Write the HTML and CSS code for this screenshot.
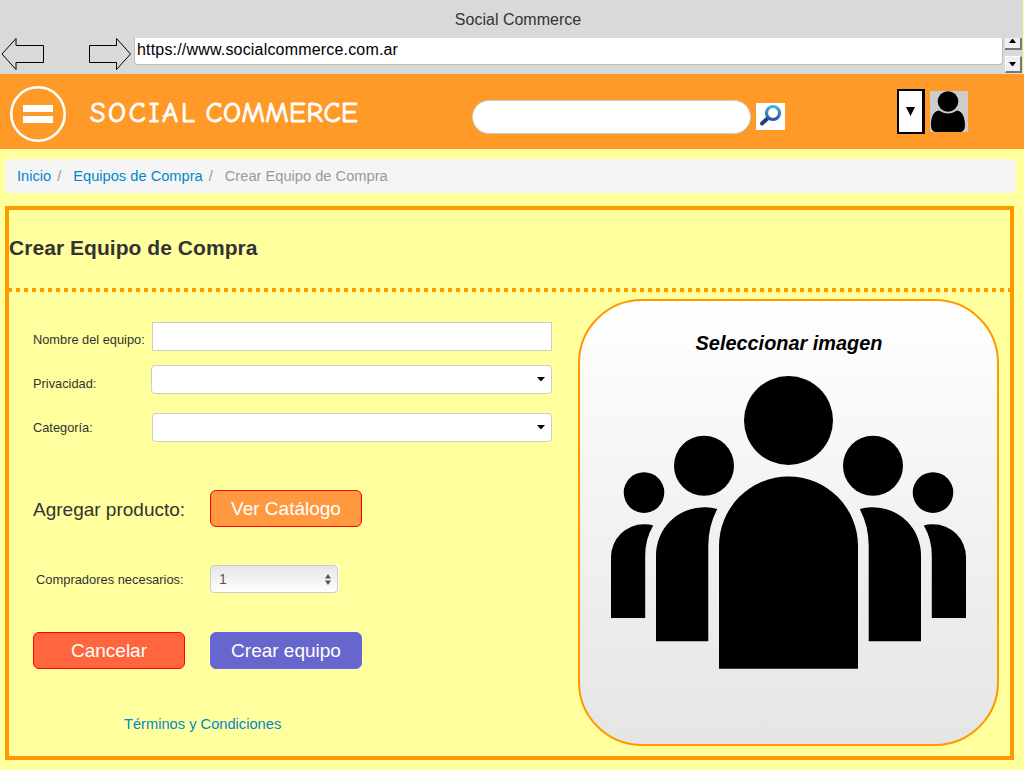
FILE: index.html
```html
<!DOCTYPE html>
<html lang="es">
<head>
<meta charset="utf-8">
<title>Social Commerce</title>
<link rel="stylesheet" href="styles.css">
</head>
<body>
<div class="chrome">
  <div class="window-title">Social Commerce</div>
  <div class="nav-row">
    <svg class="arrow" width="44" height="34" viewBox="0 0 44 34"><path d="M1 16 L15 .5 V7.500 H42.500 V24.500 H15 V31.500 Z"/></svg>
    <svg class="arrow forward" width="44" height="34" viewBox="0 0 44 34"><path d="M42.500 16 L28.500 .5 V7.500 H1.500 V24.500 H28.500 V31.500 Z"/></svg>
    <div class="address">https://www.socialcommerce.com.ar</div>
    <div class="spinner">
      <div class="spin up"><svg width="8" height="4" viewBox="0 0 8 4"><path d="M0 4 L3 0 H4 L7 4 Z"/></svg></div>
      <div class="spin down"><svg width="8" height="4" viewBox="0 0 8 4"><path d="M0 0 H7 L4 4 H3 Z"/></svg></div>
    </div>
  </div>
</div>
<header class="header">
  <svg class="menu" width="56" height="56" viewBox="0 0 56 56"><circle cx="28" cy="28" r="26.700"/><path d="M13 19 H43 V26 H13 Z M13 30 H43 V37 H13 Z"/></svg>
  <div class="brand"><span class="brand-first">SOCIAL</span> <span>COMMERCE</span></div>
  <div class="search"></div>
  <div class="search-button">
    <svg width="29" height="27" viewBox="0 0 29 27">
      <defs><linearGradient id="lens" x1="0" y1="0" x2="0" y2="1"><stop offset="0" stop-color="#45b4dc"/><stop offset="1" stop-color="#2857a5"/></linearGradient></defs>
      <path d="M12 15 L6 20.500" stroke="#20407e" stroke-width="4" stroke-linecap="round"/>
      <circle cx="17" cy="10" r="6.500" fill="#fff" stroke="url(#lens)" stroke-width="3.200"/>
    </svg>
  </div>
  <div class="account-toggle"><svg width="9" height="9" viewBox="0 0 9 9"><path d="M0 0 H9 L4.500 9 Z"/></svg></div>
  <div class="avatar"><svg width="38" height="41" viewBox="0 0 38 41"><circle cx="18" cy="10.500" r="10.300"/><path d="M9 19.500 Q18 25.500 27 19.500 C33 20 35 28 35 34 Q35 41 30 41 H6 Q1 41 1 34 C1 27 3 20 9 19.500 Z"/></svg></div>
</header>
<nav class="crumbs"><a>Inicio</a><i>/</i><a>Equipos de Compra</a><i>/</i><span>Crear Equipo de Compra</span></nav>
<main class="panel">
  <h1 class="title">Crear Equipo de Compra</h1>
  <div class="dots"></div>
  <div class="content">
    <form class="form">
      <div class="row name-row"><label>Nombre del equipo:</label><div class="field square"></div></div>
      <div class="row privacy-row"><label>Privacidad:</label><div class="field wide"><svg class="caret" width="8" height="4" viewBox="0 0 8 4"><path d="M0 0 H8 L4.500 4 H3.500 Z"/></svg></div></div>
      <div class="row category-row"><label>Categoría:</label><div class="field"><svg class="caret" width="8" height="4" viewBox="0 0 8 4"><path d="M0 0 H8 L4.500 4 H3.500 Z"/></svg></div></div>
      <div class="row product-row"><span class="product-label">Agregar producto:</span><div class="button catalog">Ver Catálogo</div></div>
      <div class="row buyers-row"><label>Compradores necesarios:</label>
        <div class="count-wrap"><div class="count"><span>1</span><svg width="6" height="11" viewBox="0 0 6 11"><path d="M3 0 L6 4.500 H0 Z M0 6.500 H6 L3 11 Z"/></svg></div></div>
      </div>
      <div class="row actions"><div class="button cancel">Cancelar</div><div class="button create">Crear equipo</div></div>
      <a class="terms">Términos y Condiciones</a>
    </form>
    <section class="picker">
      <div class="picker-title">Seleccionar imagen</div>
      <svg class="team" width="357" height="294" viewBox="610 376 357 294">
        <defs><g id="side">
          <circle cx="704" cy="465.800" r="30"/>
          <circle cx="644" cy="492.600" r="20.300"/>
          <path d="M656 641.200 V556 A48 48 0 0 1 704 507.300 Q711 507 717.200 509 A80.500 80.500 0 0 0 708.300 545.500 V641.200 Z"/>
          <path d="M611 618 V557 A33 33 0 0 1 644 524.200 Q649 524 653.200 525.500 A59 59 0 0 0 645.200 556 V618 Z"/>
        </g></defs>
        <circle cx="788.500" cy="420.500" r="44.500"/>
        <path d="M719 668.800 V546 A69.500 69.500 0 0 1 858 546 V668.800 Z"/>
        <use href="#side"/>
        <use href="#side" transform="translate(1577 0) scale(-1 1)"/>
      </svg>
    </section>
  </div>
</main>
</body>
</html>
```

FILE: styles.css
```css
* { box-sizing: border-box; }
body {
  margin: 0;
  width: 1024px;
  height: 770px;
  overflow: hidden;
  background: #ffff9e;
  color: #333;
  font-family: "Liberation Sans", Arial, sans-serif;
  font-size: 13px;
}
svg { display: block; flex: none; }
.chrome { width: 1023px; height: 74px; background: #d9d9d9; }
.window-title { height: 38px; padding: 0 0 0 13px; text-align: center; font-size: 16px; line-height: 39px; }
.nav-row { display: flex; height: 36px; }
.arrow { margin-left: 1px; fill: none; stroke: #000; }
.forward { margin-left: 43px; }
.address {
  width: 869px;
  height: 27px;
  margin-left: 2px;
  padding-left: 2px;
  background: #fff;
  border: 1px solid #bdbdbd;
  border-top: 0;
  border-radius: 0 0 4px 4px;
  color: #000;
  font-size: 16px;
  line-height: 23px;
  letter-spacing: .18px;
}
.spinner { display: flex; flex-direction: column; justify-content: space-between; width: 17px; height: 35px; margin-left: 2px; }
.spin { display: flex; justify-content: center; background: #f0f0f0; border-right: 2px solid #777; border-bottom: 2px solid #777; }
.up { height: 12px; padding-top: 1px; }
.down { height: 17px; padding-top: 5px; border-top: 1px solid #fff; border-left: 1px solid #fff; }
.header { display: flex; height: 75px; background: #ff9a28; }
.menu { margin: 12px 0 0 10px; fill: #fff; }
.menu circle { fill: none; stroke: #fff; stroke-width: 2.6; }
.brand {
  display: flex;
  gap: 8px;
  width: 382px;
  margin-left: 24px;
  color: #fff;
  font-family: "Comic Sans MS", "Comic Neue", "Noto Sans", sans-serif;
  font-size: 28px;
  line-height: 79px;
  letter-spacing: .4px;
  white-space: nowrap;
  -webkit-text-stroke: .9px #fff;
}
.brand-first { letter-spacing: 2.6px; }
.search { width: 279px; height: 34px; margin: 26px 0 0; background: #fff; border: 1px solid #ccc; border-radius: 17px; }
.search-button { width: 29px; height: 27px; margin: 29px 0 0 5px; background: #fff; }
.account-toggle {
  display: flex;
  align-items: center;
  justify-content: center;
  width: 28px;
  height: 45px;
  margin: 15px 0 0 112px;
  background: #fff;
  border: 2px solid #000;
  border-right-width: 3px;
}
.avatar { width: 38px; height: 41px; margin: 17px 0 0 5px; background: #ccc; }
.crumbs {
  display: flex;
  width: 1011px;
  height: 34px;
  margin: 10px 0 0 5px;
  padding-left: 12px;
  background: #f5f5f5;
  border-radius: 6px;
  color: #999;
  font-size: 14.67px;
  line-height: 34px;
}
.crumbs a, .terms { color: #0088cc; }
.crumbs i { width: 22px; padding-left: 6px; font-style: normal; }
.panel { width: 1009px; height: 554px; margin: 13px 0 0 5px; border: 4px solid #ff9900; }
.title { height: 78px; margin: 0; font-size: 21px; line-height: 76px; letter-spacing: .05px; }
.dots { height: 4px; background: repeating-linear-gradient(90deg, #ff9900 0 4px, transparent 4px 8px) -1px 0 / 1008px 4px; }
.content { display: flex; }
.form { width: 569px; padding: 30px 0 0 24px; }
.row { display: flex; }
.row label { width: 119px; white-space: nowrap; font-size: 12.8px; }
.field { display: flex; justify-content: flex-end; width: 400px; height: 29px; padding: 11px 6px 0 0; background: #fff; border: 1px solid #ccc; border-radius: 4px; }
.square { border-radius: 0; }
.wide { width: 401px; margin-left: -1px; }
.name-row { height: 43px; line-height: 35px; }
.privacy-row { height: 48px; line-height: 37px; }
.category-row { height: 77px; line-height: 29px; }
.product-row { height: 75px; }
.product-label { width: 177px; font-size: 19px; line-height: 39px; }
.button { width: 152px; height: 37px; border: 1px solid #f00; border-radius: 6px; color: #fff; font-size: 19px; line-height: 35px; text-align: center; }
.catalog { background: #ff9940; }
.cancel { background: #ff663d; }
.create { background: #6666cc; border-color: #6666ff; }
.buyers-row { height: 67px; padding-left: 3px; line-height: 29px; }
.buyers-row label { width: 174px; font-size: 12.9px; }
.count-wrap { width: 129px; height: 28px; background: linear-gradient(90deg, transparent 50%, #fff 50%); }
.count { display: flex; justify-content: space-between; width: 128px; height: 28px; padding: 0 6px 0 8px; background: linear-gradient(#e6e6e6, #fff); border: 1px solid #ccc; border-radius: 4px; color: #555; font-size: 14px; line-height: 27px; }
.count svg { margin-top: 8px; fill: #555; }
.actions { gap: 25px; height: 83px; }
.terms { display: block; margin-left: 91px; font-size: 14.67px; line-height: 18px; }
.picker { display: flex; flex-direction: column; align-items: center; width: 421px; height: 447px; margin-top: 7px; background: linear-gradient(#fff, #e5e5e5); border: 2px solid #ff9900; border-radius: 64px; }
.picker-title { height: 75px; padding: 30px 0 0 1px; color: #000; font-size: 19.9px; font-style: italic; font-weight: bold; line-height: 24px; }
```
